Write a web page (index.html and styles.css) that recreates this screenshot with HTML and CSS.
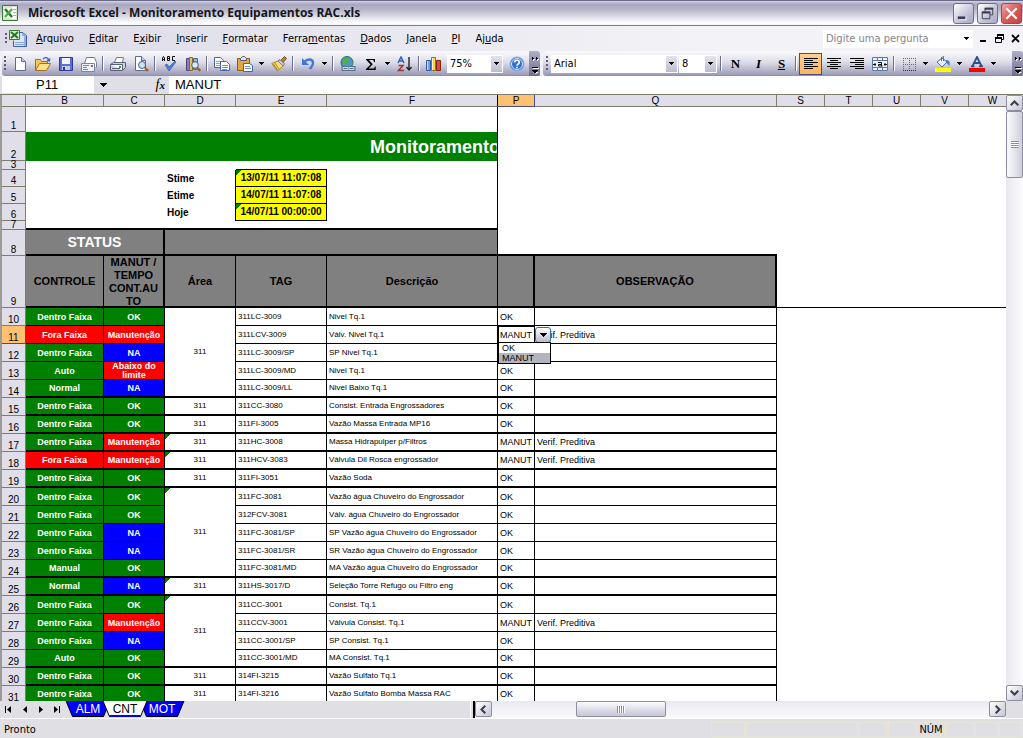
FILE: index.html
```html
<!DOCTYPE html>
<html lang="pt-BR">
<head>
<meta charset="utf-8">
<title>Microsoft Excel - Monitoramento Equipamentos RAC.xls</title>
<link rel="stylesheet" href="styles.css">
</head>
<body>
<svg class="defs" aria-hidden="true">
  <symbol id="down" viewBox="0 0 5 3"><path d="M0 0h5v1H4v1H3v1H2V2H1V1H0z"/></symbol>
  <symbol id="more" viewBox="0 0 10 24"><path fill="#fff" d="M3 6h1v1h1v1H4v1H3zM7 6h1v1h1v1H8v1H7zM3 16h6v1H3zM3 20h6L6 22z"/><path d="M2 5h1v1h1v1H3v1H2zM6 5h1v1h1v1H7v1H6zM2 15h6v1H2zM2 18h6v1H7v1H6v1H4v-1H3v-1H2z"/></symbol>
  <symbol id="xl" viewBox="0 0 16 16"><path fill="#d9e6d2" stroke="#3c7a33" d="M.5.5h15v15H.5z"/><path fill="#fff" d="M10 2h4v12h-4z"/><path fill="#9fc096" d="M10 4h4v1h-4zM10 7h4v1h-4zM10 10h4v1h-4z"/><path fill="#f5fbf2" d="M2 3h9v10H2z"/><path stroke="#1f7a22" stroke-width="2.4" d="m3 4 7 8"/><path stroke="#55aa4c" stroke-width="2.2" d="m10 4-7 8"/></symbol>
</svg>

<header class="titlebar">
  <svg class="ico" aria-hidden="true"><use href="#xl"/></svg>
  <h1>Microsoft Excel - Monitoramento Equipamentos RAC.xls</h1>
  <button class="win" aria-label="Minimizar"><svg viewBox="0 0 20 20"><path fill="#fff" d="M5 13h8v4H5z"/><path fill="#3c3c56" d="M4 13h8v3H4z"/></svg></button>
  <button class="win" aria-label="Restaurar"><svg viewBox="0 0 20 20"><path fill="none" stroke="#3c3c56" d="M7.500 8V4.500h8v7H13M4.500 8.500h8v7h-8z"/><path fill="#3c3c56" d="M7 4h9v2H7zM4 8h9v2H4z"/></svg></button>
  <button class="win close" aria-label="Fechar"><svg viewBox="0 0 20 20"><path stroke="#fff" stroke-width="2.400" d="m4.500 4.500 11 11m0-11-11 11"/></svg></button>
</header>

<nav class="menubar" aria-label="Menu">
  <span class="grip"></span>
  <svg class="book" viewBox="0 0 18 17" aria-hidden="true"><path fill="#dbe7fb" stroke="#3d5f9f" d="M6.500 2.500h7l4 3v11h-13v-6"/><path fill="#8fb0e4" d="M13 3h1l3 3v10h-2V6h-2z"/><path stroke="#86a6d6" d="M6 12.500h9M6 14.500h9"/><path fill="#dcefd4" stroke="#3c7a33" d="M.5.500h10v9H.5z"/><path stroke="#1f7a22" stroke-width="2" d="m2 2 7 6m0-6L2 8"/></svg>
  <div class="menus">
    <button><u>A</u>rquivo</button><button><u>E</u>ditar</button><button>E<u>x</u>ibir</button><button><u>I</u>nserir</button><button><u>F</u>ormatar</button><button>Ferra<u>m</u>entas</button><button><u>D</u>ados</button><button><u>J</u>anela</button><button><u>P</u>I</button><button>Aj<u>u</u>da</button>
  </div>
  <div class="ask">
    <input type="text" aria-label="Pergunta" placeholder="Digite uma pergunta">
    <svg class="arrow" aria-hidden="true"><use href="#down"/></svg>
  </div>
  <div class="mdi">
    <button aria-label="Minimizar pasta"><svg viewBox="0 0 9 9"><path d="M1 6h6v2H1z"/></svg></button>
    <button aria-label="Restaurar pasta"><svg viewBox="0 0 9 9"><path fill="none" stroke="#000" d="M2.500 3V.5h6v5H7M.5 3.500h6v5h-6z"/><path d="M2 0h7v2H2zM0 3h7v2H0z"/></svg></button>
    <button aria-label="Fechar pasta"><svg viewBox="0 0 9 9"><path stroke="#000" stroke-width="1.800" d="m1 1 7 7m0-7L1 8"/></svg></button>
  </div>
</nav>

<div class="toolbars">
  <div class="bar" role="toolbar" aria-label="Padrão">
    <span class="grip"></span>
    <button class="tool" aria-label="Novo"><svg viewBox="0 0 16 16"><path fill="#fff" stroke="#5a6c92" d="M3.500 1.500h6l4 4v9h-10z"/><path fill="#c3d3ee" stroke="#5a6c92" d="M9.500 1.500v4h4"/></svg></button>
    <button class="tool" aria-label="Abrir"><svg viewBox="0 0 16 16"><path fill="#f3c65a" stroke="#a2701c" d="M.5 14.500v-11h5l1 2h6v3"/><path fill="#ffe08a" stroke="#a2701c" d="m.5 14.500 4-7h11l-4 7z"/><path fill="none" stroke="#3267c4" stroke-width="1.300" d="M8 3c2-2.500 5-1.500 6 1.500M12 4l2.200 1L15 2.500"/></svg></button>
    <button class="tool" aria-label="Salvar"><svg viewBox="0 0 16 16"><path fill="#5a6fd8" stroke="#2b3a9a" d="M1.500 1.500h13v13h-13z"/><path fill="#f2f5ff" d="M4 2h8v6H4z"/><path fill="#c6cce0" d="M4 10h8v4H4z"/><path fill="#2b3a9a" d="M5 11h2v3H5z"/></svg></button>
    <button class="tool" aria-label="E-mail"><svg viewBox="0 0 16 16"><path fill="#fff" stroke="#707c98" d="m3.500 7.500 2-6h8l2 5v5"/><path fill="#eef2fa" stroke="#6d86b4" d="M.5 7.500h13v8H.5z"/><path fill="none" stroke="#6d86b4" d="M2 9.500h6M2 11.500h4M2 13.500h5"/><path fill="#d65050" d="M10 9h2v2h-2z"/></svg></button>
    <span class="sep"></span>
    <button class="tool" aria-label="Imprimir"><svg viewBox="0 0 16 16"><path fill="#fff" stroke="#6f7890" d="m4.500 6.500 2-5h7l-1 5"/><path fill="#cbd2df" stroke="#59627a" d="m.5 8.500 3-2h12v5l-3 3H.5z"/><path fill="#f8faff" stroke="#59627a" d="M.5 8.500h12v6"/><path fill="#2a9c34" d="M9 10h2v2H9z"/><path stroke="#59627a" d="M2 12.500h8"/></svg></button>
    <button class="tool" aria-label="Visualizar impressão"><svg viewBox="0 0 16 16"><path fill="#fff" stroke="#5a6c92" d="M2.500.5h6l4 4v10h-10z"/><path fill="#c3d3ee" stroke="#5a6c92" d="M8.500.5v4h4"/><circle cx="9" cy="9" r="3.500" fill="#c4e4f4" stroke="#50606e"/><path stroke="#a0621c" stroke-width="2.400" d="m12 12 3 3"/></svg></button>
    <span class="sep"></span>
    <button class="tool" aria-label="Ortografia"><svg viewBox="0 0 16 16"><path fill="none" stroke="#111" d="M.5 5V2l1-1.500 1 1.500v3M.5 3.500h2M5.500.5v4h2v-4zM5.500 2.500h2.500M13 .5h-2.500v4H13"/><path fill="#4a80dc" stroke="#28529c" stroke-width=".6" d="m3 9 2-1 2 3 6-6 1 1-7 9z"/></svg></button>
    <button class="tool" aria-label="Pesquisar"><svg viewBox="0 0 16 16"><path fill="#8b7bb8" stroke="#4d4282" d="M1.500 2.500h3v12h-3z"/><path fill="#dfc26c" stroke="#8a6a20" d="M4.500 1.500h3v13h-3z"/><path fill="#94b6dc" stroke="#486a94" d="M8.500 2.500h4v11h-4z"/><circle cx="10" cy="9" r="3.300" fill="#d3ecf8" stroke="#50606e"/><path stroke="#a0621c" stroke-width="2.400" d="m12.500 12 3 3"/></svg></button>
    <span class="sep"></span>
    <button class="tool" aria-label="Copiar"><svg viewBox="0 0 16 16"><path fill="#fff" stroke="#3f66ae" d="M.5 1.500h6l3 3v7h-9z"/><path stroke="#86a6d6" d="M2 5.500h5M2 7.500h4M2 9.500h4"/><path fill="#fff" stroke="#3f66ae" d="M6.500 5.500h6l3 3v6h-9z"/><path stroke="#6b92d0" d="M8 9.500h6M8 11.500h6M8 13.500h5"/></svg></button>
    <button class="tool" aria-label="Colar"><svg viewBox="0 0 16 16"><path fill="#e4a642" stroke="#8e5b16" d="M.5 2.500h12v12H.5z"/><path fill="#dadfe8" stroke="#59627a" d="M3.500 4.500v-2l2-2h2l2 2v2z"/><path fill="#fff" stroke="#3f66ae" d="M6.500 7.500h6l3 2v6h-9z"/><path stroke="#6b92d0" d="M8 10.500h5M8 12.500h6"/></svg></button>
    <button class="drop" aria-label="Opções de colar"><svg><use href="#down"/></svg></button>
    <button class="tool" aria-label="Pincel"><svg viewBox="0 0 16 16"><path fill="#b3824a" stroke="#704b20" d="m9.500 5 4-4.500 2 2-4 4.500z"/><path fill="#c8cfdc" stroke="#68718a" d="m7 5 5 5 1.500-2-4.500-4.500z"/><path fill="#f9dd78" stroke="#a88420" d="M7 5 .8 7.500l5.700 7.500L12 10z"/><path stroke="#a88420" d="m4 7 4 6M2.500 8l4 6"/></svg></button>
    <span class="sep"></span>
    <button class="tool" aria-label="Desfazer"><svg viewBox="0 0 16 16"><path fill="none" stroke="#3f78dc" stroke-width="2.400" d="M4 6c4-4 9-3 9 1 0 3-2 4-3 6"/><path fill="#3f78dc" d="M2 2v7h7z"/></svg></button>
    <button class="drop" aria-label="Lista de desfazer"><svg><use href="#down"/></svg></button>
    <span class="sep"></span>
    <button class="tool" aria-label="Hiperlink"><svg viewBox="0 0 16 16"><circle cx="7" cy="6.500" r="6" fill="#4f94d8" stroke="#2b5e96"/><path fill="#4fb04a" d="M3 3c3-3 6-1 7 1L7 7 6 10 2 7zM10 7l3-1-1 4z"/><path fill="none" stroke="#59708c" stroke-width="3" d="M3 11.500h5v2H3zM9 11.500h5v2H9z"/><path fill="none" stroke="#c9dcf0" d="M3 11.500h5v2H3zM9 11.500h5v2H9z"/></svg></button>
    <button class="tool" aria-label="AutoSoma"><svg viewBox="0 0 16 16"><path d="M3 3h9v3h-1l-.7-2H6l3.700 4.200L5.600 12.500H11l1-2h.7V14H3v-1l4.500-4.500L3 3.700z"/></svg></button>
    <button class="drop" aria-label="Opções de soma"><svg><use href="#down"/></svg></button>
    <button class="tool" aria-label="Classificar"><svg viewBox="0 0 16 16"><path fill="none" stroke="#2f64b4" stroke-width="1.500" d="m1 7 3-6 3 6M2.500 5h3"/><path fill="none" stroke="#a43434" stroke-width="1.500" d="M1.500 9.500H6l-4.500 5H7"/><path fill="none" stroke="#222" stroke-width="1.400" d="M12 1v13m-2.500-3 2.500 3 2.500-3"/></svg></button>
    <span class="sep"></span>
    <button class="tool" aria-label="Gráfico"><svg viewBox="0 0 16 16"><path fill="#6ea0e6" stroke="#2f5aa6" d="M.5 4.500h4v10h-4z"/><path fill="#f6d34c" stroke="#94701a" d="M5.500 1.500h4v13h-4z"/><path fill="#dc4c34" stroke="#86240f" d="M10.500 4.500h4v10h-4z"/><path fill="#c4dcff" d="M1 5h1v9H1z"/><path fill="#fff2b4" d="M6 2h1v12H6z"/></svg></button>
    <div class="combo zoom"><select aria-label="Zoom"><option>75%</option></select><svg class="arrow" aria-hidden="true"><use href="#down"/></svg></div>
    <button class="tool" aria-label="Ajuda"><svg viewBox="0 0 16 16"><circle cx="8" cy="8" r="7" fill="#2e6fd6" stroke="#8fb1e8"/><circle cx="8" cy="8" r="5.500" fill="none" stroke="#d9e7ff"/><path fill="none" stroke="#fff" stroke-width="1.700" d="M5.700 6.500c0-3 4.600-3 4.600 0C10.300 8 8 8 8 9.800M8 10.800v1.500"/></svg></button>
    <button class="more" aria-label="Mais botões"><svg><use href="#more"/></svg></button>
  </div>
  <div class="bar format" role="toolbar" aria-label="Formatação">
    <span class="grip"></span>
    <div class="combo font"><select aria-label="Fonte"><option>Arial</option></select><svg class="arrow" aria-hidden="true"><use href="#down"/></svg></div>
    <div class="combo size"><select aria-label="Tamanho"><option>8</option></select><svg class="arrow" aria-hidden="true"><use href="#down"/></svg></div>
    <span class="sep"></span>
    <button class="tool glyph"><b>N</b></button>
    <button class="tool glyph"><i>I</i></button>
    <button class="tool glyph"><u>S</u></button>
    <span class="sep"></span>
    <button class="tool on" aria-label="Alinhar à esquerda"><svg viewBox="0 0 16 16"><path stroke="#000" d="M1 2.500h14M1 4.500h9M1 6.500h14M1 8.500h9M1 10.500h14M1 12.500h9"/></svg></button>
    <button class="tool" aria-label="Centralizar"><svg viewBox="0 0 16 16"><path stroke="#000" d="M1 2.500h14M4 4.500h8M1 6.500h14M4 8.500h8M1 10.500h14M4 12.500h8"/></svg></button>
    <button class="tool" aria-label="Alinhar à direita"><svg viewBox="0 0 16 16"><path stroke="#000" d="M1 2.500h14M6 4.500h9M1 6.500h14M6 8.500h9M1 10.500h14M6 12.500h9"/></svg></button>
    <button class="tool" aria-label="Mesclar"><svg viewBox="0 0 16 16"><path fill="#eef4ff" stroke="#5a78ac" d="M.5 1.500h15v13H.5z"/><path stroke="#5a78ac" d="M0 4.500h16M0 11.500h16M5.500 1.500v3M10.500 1.500v3M5.500 11.500v3M10.500 11.500v3"/><path fill="none" stroke="#111" d="M1 8.500h3M12 8.500h3M3 7v3M13 7v3"/><path fill="none" stroke="#111" d="M6 6.500h3.500V10M9.500 8.500h-3v1.500h4"/></svg></button>
    <span class="sep"></span>
    <button class="tool" aria-label="Bordas"><svg viewBox="0 0 16 16"><path fill="none" stroke="#666a80" stroke-dasharray="1 1" d="M2 2.500h13M2 8.500h13M2.500 2v12M8.500 2v12M14.500 2v12"/><path stroke="#333" stroke-dasharray="1 1" d="M2 14.500h13"/></svg></button>
    <button class="drop" aria-label="Opções de bordas"><svg><use href="#down"/></svg></button>
    <button class="tool" aria-label="Cor do preenchimento"><svg viewBox="0 0 16 16"><path fill="#e8f0fb" stroke="#52709e" d="m2 6 5-4 5 4-5 5z"/><path fill="none" stroke="#8c6b3c" d="M6.500 5V1.500l2-1V5"/><path fill="#3f78c8" d="M11 4c4 0 4 3 3.500 6C13 9 13 7 11 7z"/><path fill="#ffff00" d="M0 12h16v4H0z"/></svg></button>
    <button class="drop" aria-label="Opções de preenchimento"><svg><use href="#down"/></svg></button>
    <button class="tool" aria-label="Cor da fonte"><svg viewBox="0 0 16 16"><path fill="none" stroke="#2c4f8e" stroke-width="1.800" d="m3.500 10 4.500-9 4.500 9M5 7h6M2 10.300h3.500M10 10.300h4"/><path fill="#f00" d="M0 12h16v4H0z"/></svg></button>
    <button class="drop" aria-label="Opções de cor da fonte"><svg><use href="#down"/></svg></button>
    <button class="more last" aria-label="Mais botões de formatação"><svg><use href="#more"/></svg></button>
  </div>
</div>

<div class="formula">
  <input class="namebox" type="text" aria-label="Caixa de nome" value="P11">
  <button class="namedrop" aria-label="Nomes"><svg viewBox="0 0 7 4"><path d="M0 0h7v1H6v1H5v1H4v1H3V3H2V2H1V1H0z"/></svg></button>
  <button class="fx" aria-label="Inserir função">f<small>x</small></button>
  <input class="fxbox" type="text" aria-label="Fórmula" value="MANUT">
</div>

<main class="sheet">
  <div class="view">
    <table>
      <colgroup><col class="k-head"><col class="k-b"><col class="k-c"><col class="k-d"><col class="k-e"><col class="k-f"><col class="k-p"><col class="k-q"><col class="k-s"><col class="k-s"><col class="k-s"><col class="k-s"><col></colgroup>
      <thead>
        <tr><th></th><th>B</th><th>C</th><th>D</th><th>E</th><th class="freeze">F</th><th class="active">P</th><th>Q</th><th>S</th><th>T</th><th>U</th><th>V</th><th>W</th></tr>
      </thead>
      <tbody class="top">
        <tr class="r1"><th>1</th><td colspan="5" class="freeze"></td><td colspan="7"></td></tr>
        <tr class="r2"><th>2</th><td colspan="5" class="banner freeze"><div>Monitoramento</div></td><td colspan="7"></td></tr>
        <tr class="r3"><th>3</th><td colspan="3"></td><td class="line"></td><td class="freeze"></td><td colspan="7"></td></tr>
        <tr class="r4"><th>4</th><td colspan="2"></td><td class="label">Stime</td><td class="date flag">13/07/11 11:07:08</td><td class="freeze"></td><td colspan="7"></td></tr>
        <tr class="r4"><th>5</th><td colspan="2"></td><td class="label">Etime</td><td class="date">14/07/11 11:07:08</td><td class="freeze"></td><td colspan="7"></td></tr>
        <tr class="r4"><th>6</th><td colspan="2"></td><td class="label">Hoje</td><td class="date flag">14/07/11 00:00:00</td><td class="freeze"></td><td colspan="7"></td></tr>
        <tr class="r3"><th>7</th><td colspan="5" class="thick freeze"></td><td colspan="7"></td></tr>
        <tr class="r8"><th>8</th><td colspan="2" class="gray status">STATUS</td><td colspan="3" class="gray freeze"></td><td colspan="2" class="thick"></td><td colspan="5"></td></tr>
        <tr class="r9"><th>9</th><td class="gray">CONTROLE</td><td class="gray wide"><div class="tall">MANUT / TEMPO CONT.AU TO</div></td><td class="gray">Área</td><td class="gray">TAG</td><td class="gray">Descrição</td><td class="gray wide"></td><td class="gray wide">OBSERVAÇÃO</td><td colspan="5" class="line"></td></tr>
      </tbody>
      <tbody class="data">
        <tr><th>10</th><td class="green">Dentro Faixa</td><td class="green">OK</td><td class="area end" rowspan="5">311</td><td>311LC-3009</td><td>Nivel Tq.1</td><td>OK</td><td></td><td colspan="5"></td></tr>
        <tr><th class="active">11</th><td class="red">Fora Faixa</td><td class="red">Manutenção</td><td>311LCV-3009</td><td>Válv. Nivel Tq.1</td><td class="cursor">MANUT
          <button class="open" aria-label="Abrir lista"><svg viewBox="0 0 7 4"><path d="M0 0h7v1H6v1H5v1H4v1H3V3H2V2H1V1H0z"/></svg></button>
          <ul role="listbox" aria-label="Valores"><li role="option" aria-selected="false">OK</li><li role="option" aria-selected="true">MANUT</li></ul></td><td>Verif. Preditiva</td><td colspan="5"></td></tr>
        <tr><th>12</th><td class="green">Dentro Faixa</td><td class="blue">NA</td><td>311LC-3009/SP</td><td>SP Nivel Tq.1</td><td></td><td></td><td colspan="5"></td></tr>
        <tr><th>13</th><td class="green">Auto</td><td class="red two"><div>Abaixo do<br>limite</div></td><td>311LC-3009/MD</td><td>Nivel Tq.1</td><td>OK</td><td></td><td colspan="5"></td></tr>
        <tr class="end"><th>14</th><td class="green">Normal</td><td class="blue">NA</td><td>311LC-3009/LL</td><td>Nivel Baixo Tq.1</td><td>OK</td><td></td><td colspan="5"></td></tr>
        <tr class="end"><th>15</th><td class="green">Dentro Faixa</td><td class="green">OK</td><td class="area">311</td><td>311CC-3080</td><td>Consist. Entrada Engrossadores</td><td>OK</td><td></td><td colspan="5"></td></tr>
        <tr class="end"><th>16</th><td class="green">Dentro Faixa</td><td class="green">OK</td><td class="area">311</td><td>311FI-3005</td><td>Vazão Massa Entrada MP16</td><td>OK</td><td></td><td colspan="5"></td></tr>
        <tr class="end"><th>17</th><td class="green">Dentro Faixa</td><td class="red">Manutenção</td><td class="area flag">311</td><td>311HC-3008</td><td>Massa Hidrapulper p/Filtros</td><td>MANUT</td><td>Verif. Preditiva</td><td colspan="5"></td></tr>
        <tr class="end"><th>18</th><td class="red">Fora Faixa</td><td class="red">Manutenção</td><td class="area flag">311</td><td>311HCV-3083</td><td>Válvula Dil Rosca engrossador</td><td>MANUT</td><td>Verif. Preditiva</td><td colspan="5"></td></tr>
        <tr class="end"><th>19</th><td class="green">Dentro Faixa</td><td class="green">OK</td><td class="area">311</td><td>311FI-3051</td><td>Vazão Soda</td><td>OK</td><td></td><td colspan="5"></td></tr>
        <tr><th>20</th><td class="green">Dentro Faixa</td><td class="green">OK</td><td class="area flag end" rowspan="5">311</td><td>311FC-3081</td><td>Vazão água Chuveiro do Engrossador</td><td>OK</td><td></td><td colspan="5"></td></tr>
        <tr><th>21</th><td class="green">Dentro Faixa</td><td class="green">OK</td><td>312FCV-3081</td><td>Válv. água Chuveiro do Engrossador</td><td>OK</td><td></td><td colspan="5"></td></tr>
        <tr><th>22</th><td class="green">Dentro Faixa</td><td class="blue">NA</td><td>311FC-3081/SP</td><td>SP Vazão água Chuveiro do Engrossador</td><td>OK</td><td></td><td colspan="5"></td></tr>
        <tr><th>23</th><td class="green">Dentro Faixa</td><td class="blue">NA</td><td>311FC-3081/SR</td><td>SR Vazão água Chuveiro do Engrossador</td><td>OK</td><td></td><td colspan="5"></td></tr>
        <tr class="end"><th>24</th><td class="green">Manual</td><td class="green">OK</td><td>311FC-3081/MD</td><td>MA Vazão água Chuveiro do Engrossador</td><td>OK</td><td></td><td colspan="5"></td></tr>
        <tr class="end"><th>25</th><td class="green">Normal</td><td class="blue">NA</td><td class="area flag">311</td><td>311HS-3017/D</td><td>Seleção Torre Refugo ou Filtro eng</td><td>OK</td><td></td><td colspan="5"></td></tr>
        <tr><th>26</th><td class="green">Dentro Faixa</td><td class="green">OK</td><td class="area flag end" rowspan="4">311</td><td>311CC-3001</td><td>Consist. Tq.1</td><td>OK</td><td></td><td colspan="5"></td></tr>
        <tr><th>27</th><td class="green">Dentro Faixa</td><td class="red">Manutenção</td><td>311CCV-3001</td><td>Válvula Consist. Tq.1</td><td>MANUT</td><td>Verif. Preditiva</td><td colspan="5"></td></tr>
        <tr><th>28</th><td class="green">Dentro Faixa</td><td class="blue">NA</td><td>311CC-3001/SP</td><td>SP Consist. Tq.1</td><td>OK</td><td></td><td colspan="5"></td></tr>
        <tr class="end"><th>29</th><td class="green">Auto</td><td class="green">OK</td><td>311CC-3001/MD</td><td>MA Consist. Tq.1</td><td>OK</td><td></td><td colspan="5"></td></tr>
        <tr class="end"><th>30</th><td class="green">Dentro Faixa</td><td class="green">OK</td><td class="area">311</td><td>314FI-3215</td><td>Vazão Sulfato Tq.1</td><td>OK</td><td></td><td colspan="5"></td></tr>
        <tr class="end"><th>31</th><td class="green">Dentro Faixa</td><td class="green">OK</td><td class="area">311</td><td>314FI-3216</td><td>Vazão Sulfato Bomba Massa RAC</td><td>OK</td><td></td><td colspan="5"></td></tr>
      </tbody>
    </table>
  </div>
  <div class="vscroll">
    <button class="sb" aria-label="Para cima"><svg viewBox="0 0 9 6"><path fill="none" stroke="#3c3c48" stroke-width="2" d="M.7 5.300 4.500 1.500l3.800 3.800"/></svg></button>
    <div class="thumb"><span></span></div>
    <button class="sb bottom" aria-label="Para baixo"><svg viewBox="0 0 9 6"><path fill="none" stroke="#3c3c48" stroke-width="2" d="M.7.700 4.500 4.500 8.300.700"/></svg></button>
  </div>
</main>

<div class="tabsrow">
  <div class="tabs">
    <button class="go" aria-label="Primeira"><svg viewBox="0 0 8 7"><path d="M0 0h1v7H0zM6 0v7L2 3.500z"/></svg></button>
    <button class="go" aria-label="Anterior"><svg viewBox="0 0 8 7"><path d="M6 0v7L2 3.500z"/></svg></button>
    <button class="go" aria-label="Próxima"><svg viewBox="0 0 8 7"><path d="M2 0v7l4-3.500z"/></svg></button>
    <button class="go" aria-label="Última"><svg viewBox="0 0 8 7"><path d="M1 0v7l4-3.500zM6 0h1v7H6z"/></svg></button>
    <button class="tab"><svg viewBox="0 0 46 16"><path fill="#00f" stroke="#000" d="M1 0l6.500 15.500h31L45 0"/></svg><span>ALM</span></button>
    <button class="tab current"><svg viewBox="0 0 46 16"><path fill="#fff" stroke="#000" d="M1 0l6.500 15.500h31L45 0"/><path fill="#00f" d="M7.500 14h31v2h-31z"/></svg><span>CNT</span></button>
    <button class="tab"><svg viewBox="0 0 46 16"><path fill="#00f" stroke="#000" d="M1 0l6.500 15.500h31L45 0"/></svg><span>MOT</span></button>
    <span class="split"></span>
  </div>
  <div class="hscroll">
    <button class="sb" aria-label="Para a esquerda"><svg viewBox="0 0 6 9"><path fill="none" stroke="#3c3c48" stroke-width="2" d="M5.300.7 1.500 4.500l3.800 3.800"/></svg></button>
    <div class="track"><div class="thumb"><span></span></div></div>
    <button class="sb" aria-label="Para a direita"><svg viewBox="0 0 6 9"><path fill="none" stroke="#3c3c48" stroke-width="2" d="M.7.700 4.500 4.500.7 8.300"/></svg></button>
  </div>
  <span class="corner"></span>
</div>

<footer class="statusbar">
  <span class="ready">Pronto</span>
  <span class="pane mid"></span><span class="pane long"></span><span class="pane"></span><span class="pane"></span><span class="pane">NÚM</span><span class="pane"></span><span class="pane short"></span><span class="pane short"></span>
</footer>
</body>
</html>
```
FILE: styles.css
```css
* { box-sizing: border-box; }
html, body { height: 100%; }
body {
  margin: 0;
  display: flex;
  flex-direction: column;
  overflow: hidden;
  background: #e0dfe3;
  color: #000;
  font: 11px/14px "DejaVu Sans Condensed", "DejaVu Sans", sans-serif;
}
button, input, select { font: inherit; color: inherit; margin: 0; padding: 0; border: 0; border-radius: 0; background: none; outline: 0; }
button { display: flex; align-items: center; justify-content: center; flex: none; }
svg { display: block; flex: none; }
.defs { position: absolute; width: 0; height: 0; }

/* title bar */
.titlebar {
  flex: none;
  display: flex;
  align-items: center;
  gap: 3px;
  height: 26px;
  padding: 0 1px 0 2px;
  border-top: 1px solid #6a6889;
  border-bottom: 1px solid #7c7b98;
  background: linear-gradient(#d6d6e2 0, #a9a8c1 3px, #b4b3c8 8px, #d9d9e4 15px, #fff 22px, #f4f4f8 24px);
}
.titlebar .ico { width: 16px; height: 16px; }
.titlebar h1 { flex: 1; margin: 0; padding-left: 7px; color: #16161c; font: bold 12px/16px "Open Sans", sans-serif; white-space: nowrap; overflow: hidden; }
.win { width: 21px; height: 21px; border: 1px solid #6f6e92; border-radius: 3px; background: linear-gradient(135deg, #fff, #c4c4d8 60%, #a7a7c4); }
.win svg { width: 19px; height: 19px; }
.win.close { border-color: #9c4a4c; background: linear-gradient(135deg, #f0a8a4, #dc5a58 50%, #c44044); }

/* menu bar */
.menubar { flex: none; display: flex; align-items: center; height: 25px; padding: 0 3px 0 5px; background: linear-gradient(90deg, #dcdbe7, #f3f3f7 70%); }
.grip { flex: none; width: 2px; height: 11px; background: repeating-linear-gradient(#5b5a78 0 2px, transparent 2px 4px); }
.book { width: 18px; height: 17px; margin-left: 2px; }
.menus { display: flex; flex: 1; gap: 15px; padding-left: 9px; }
.ask { display: grid; align-items: center; width: 150px; height: 18px; background: #fff; }
.ask > *, .combo > * { grid-area: 1 / 1; }
.ask input { width: 100%; min-width: 0; padding-left: 3px; }
.ask input::placeholder { color: #85848f; opacity: 1; }
.arrow { width: 13px; height: 3px; justify-self: end; pointer-events: none; }
.mdi { display: flex; gap: 7px; padding-left: 6px; }
.mdi svg { width: 9px; height: 9px; }

/* toolbars */
.toolbars { flex: none; display: flex; gap: 3px; height: 25px; padding-left: 2px; background: #efeff5; }
.bar { display: flex; align-items: center; background: linear-gradient(#fafafc, #dddde9 45%, #9c9bb8 96%, #86859f); border-radius: 3px 0 0 3px; }
.bar .grip { margin: 0 2px; height: 15px; }
.format { flex: 1; }
.format .grip { margin: 0 3px; }
.tool { width: 23px; height: 22px; }
.tool svg { width: 16px; height: 16px; }
.tool.on { border: 1px solid #4b4b8c; background: linear-gradient(#ffcf8f, #ffb55c); }
.glyph { font: bold 13px/16px "Liberation Serif", serif; }
.drop { width: 11px; height: 22px; }
.drop svg { width: 5px; height: 3px; }
.sep { flex: none; width: 6px; height: 15px; background: linear-gradient(90deg, transparent 2px, #6e6d8f 2px 3px, #fff 3px 4px, transparent 4px); }
.combo { display: grid; align-items: center; height: 18px; background: #fff; }
.combo select { appearance: none; width: 100%; height: 18px; padding-left: 3px; }
.combo .arrow { width: 11px; height: 16px; padding: 6px 3px 7px; margin-right: 1px; background: linear-gradient(#e4e4ee, #bcbcd0); }
.zoom { width: 56px; margin: 0 2px; }
.font { width: 127px; }
.size { width: 38px; margin: 0 1px; }
.more { width: 11px; height: 25px; margin-left: 1px; background: linear-gradient(#b0afc8, #6e6d8f); border-radius: 0 3px 3px 0; }
.more svg { width: 10px; height: 24px; }
.more.last { margin-left: auto; }

/* formula bar */
.formula { flex: none; display: flex; height: 18px; padding-left: 2px; background: #e0dfe8; font: 13px/18px "Liberation Sans", sans-serif; }
.namebox { width: 92px; height: 17px; padding-left: 34px; background: #fff; }
.namedrop { width: 18px; }
.namedrop svg, .open svg { width: 7px; height: 4px; }
.fx { width: 57px; justify-content: flex-end; padding-right: 4px; font: italic 14px/16px "Liberation Serif", serif; }
.fx small { font-size: 11px; font-weight: bold; }
.fxbox { flex: 1; min-width: 0; padding-left: 6px; height: 18px; background: #fff; }

/* worksheet */
.sheet { flex: 1; min-height: 0; display: flex; padding-left: 2px; background: #9c9a94; border-top: 1px solid #7f7c6c; }
.view { flex: 1; min-width: 0; overflow: hidden; background: #fff; }
table { table-layout: fixed; width: 100%; min-width: 1015px; border-spacing: 0; font: 8px/10px "Liberation Sans", sans-serif; }
th, td { padding: 0; height: inherit; white-space: nowrap; vertical-align: middle; }
.k-head { width: 24px; } .k-b { width: 78px; } .k-c { width: 61px; } .k-d { width: 71px; }
.k-e { width: 91px; } .k-f { width: 171px; } .k-p { width: 37px; } .k-q { width: 242px; } .k-s { width: 48px; }
th { border: solid #7f7c6c; border-width: 0 1px 1px 0; background: #dfdee9; font-size: 10px; font-weight: normal; vertical-align: bottom; }
th.active { background: #ffc070; border-color: #4b4b8c; }
thead tr { height: 12px; }
.freeze { border-right: 1px solid #000; }
.line { border-bottom: 1px solid #000; }
.thick { border-bottom: 2px solid #000; }
.r1 { height: 25px; } .r2 { height: 29px; } .r3 { height: 9px; line-height: 8px; }
.r4 { height: 17px; } .r8 { height: 26px; } .r9 { height: 52px; }
.banner { background: #008000; }
.banner div { width: 471px; padding-left: 344px; overflow: hidden; color: #fff; font: bold 18px/22px "Liberation Sans", sans-serif; }
.label { padding-left: 2px; border-right: 1px solid #000; font-size: 10px; font-weight: bold; }
.date { border: solid #000; border-width: 0 1px 1px 0; background-color: #ff0; text-align: center; font-size: 10px; font-weight: bold; }
.flag { background-image: linear-gradient(135deg, #008000 4px, transparent 4px); }
.gray { border: solid #000; border-width: 0 1px 2px 0; background: #808080; text-align: center; font-size: 11px; line-height: 13px; font-weight: bold; white-space: normal; }
.gray.wide { border-right-width: 2px; }
.gray.status { border-right-width: 2px; color: #fff; font-size: 14px; }
.tall { height: 50px; }
.data tr { height: 18px; }
.data td { border: solid #000; border-width: 0 1px 1px 0; padding-left: 2px; }
.data .end td, .data td.end { border-bottom-width: 2px; }
.data td:last-child { border: 0; }
.data td:nth-last-child(2), .data td:nth-last-child(3) { font-size: 9px; }
.data .area { padding: 0; text-align: center; }
.data .green, .data .red, .data .blue { padding: 0; text-align: center; color: #fff; font-size: 9px; font-weight: bold; }
.green { background: #008000; }
.red { background: #f00; }
.blue { background: #00f; }
.two div { height: 17px; line-height: 9px; }
.data .cursor { position: relative; outline: 1px solid #000; outline-offset: -1px; }
.open { position: absolute; left: 37px; top: 1px; width: 16px; height: 16px; border: 1px solid #3c6a94; border-radius: 3px; background: linear-gradient(#fff, #b9b9cc); }
.cursor ul { position: absolute; z-index: 1; left: 0; top: 16px; width: 53px; margin: 0; padding: 0; border: 1px solid #000; list-style: none; background: #fff; }
.cursor li { padding-left: 3px; }
.cursor li[aria-selected="true"] { background: #b2b4bf; }

/* scroll bars */
.vscroll { flex: none; display: flex; flex-direction: column; width: 17px; background: linear-gradient(90deg, #e8e8f0, #fbfbfd); }
.sb { width: 17px; height: 16px; border: 1px solid #8e8da4; border-radius: 2px; background: linear-gradient(135deg, #fff, #c5c5d6); }
.vscroll .sb svg { width: 9px; height: 6px; }
.hscroll .sb svg { width: 6px; height: 9px; }
.bottom { margin-top: auto; }
.thumb { display: flex; align-items: center; justify-content: center; border: 1px solid #8e8da4; border-radius: 2px; }
.vscroll .thumb { flex: none; height: 67px; background: linear-gradient(90deg, #fafafc, #cfcfdd); }
.vscroll .thumb span { width: 8px; height: 7px; background: repeating-linear-gradient(#8e8da4 0 1px, #fff 1px 2px); }
.tabsrow { flex: none; display: flex; height: 17px; background: #e0dfe3; }
.tabs { flex: 474; display: flex; padding-left: 1px; }
.go { width: 16px; height: 16px; }
.go svg { width: 8px; height: 7px; }
.tab { display: grid; width: 46px; height: 16px; margin-right: -9px; font: 12px/16px "Liberation Sans", sans-serif; color: #fff; }
.tab > * { grid-area: 1 / 1; }
.tab svg { width: 46px; height: 16px; }
.tab.current { z-index: 1; color: #000; }
.split { margin-left: auto; width: 5px; border: solid #fff; border-width: 0 1px 0 1px; border-right: 2px solid #000; }
.hscroll { flex: 532; display: flex; background: linear-gradient(#e8e8f0, #fbfbfd); }
.track { flex: 1; }
.hscroll .thumb { width: 18%; height: 16px; margin-left: 17%; background: linear-gradient(#fafafc, #c5c5d6); }
.hscroll .thumb span { width: 8px; height: 7px; background: repeating-linear-gradient(90deg, #8e8da4 0 1px, #fff 1px 2px); }
.corner { width: 17px; }

/* status bar */
.statusbar { flex: none; display: flex; align-items: center; gap: 1px; height: 20px; padding: 2px 1px 0 4px; border-top: 1px solid #fff; }
.ready { flex: 1; }
.pane { width: 28px; height: 15px; border: 1px solid #e9e6d6; text-align: center; line-height: 13px; white-space: nowrap; }
.pane.mid { width: 34px; }
.pane.long { width: 112px; }
.pane.short { width: 23px; }
```
